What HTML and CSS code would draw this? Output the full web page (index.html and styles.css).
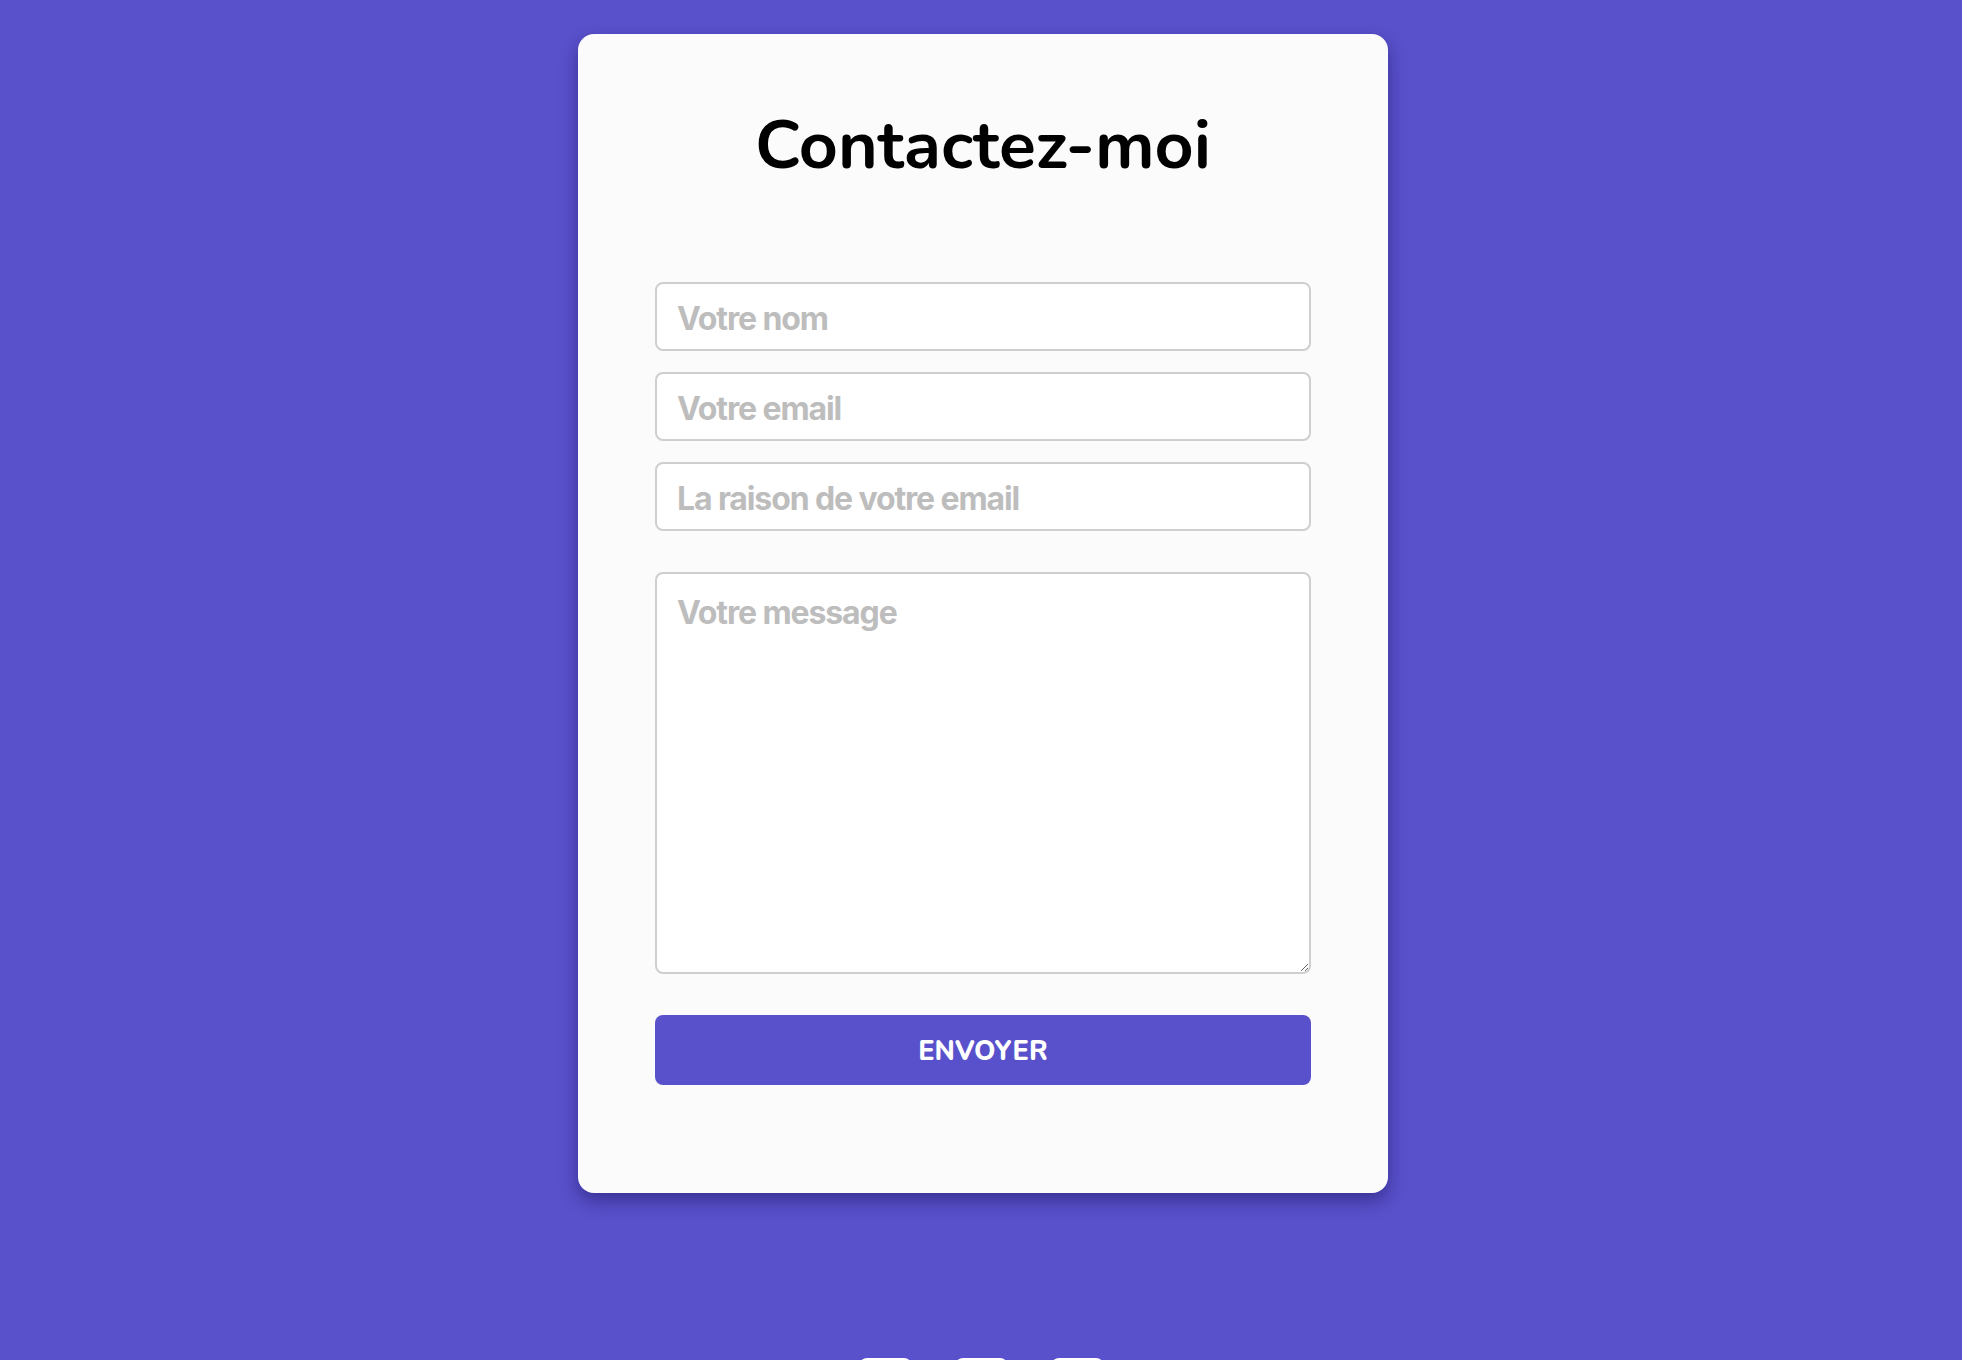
FILE: index.html
```html
<!DOCTYPE html>
<html lang="fr">
<head>
<meta charset="utf-8">
<title>Contactez-moi</title>
<link rel="stylesheet" href="styles.css">
</head>
<body>
<main class="page">
  <section class="card">
    <h1 class="title">Contactez-moi</h1>
    <form class="form">
      <div class="fields">
        <input class="field" type="text" placeholder="Votre nom">
        <input class="field" type="email" placeholder="Votre email">
        <input class="field" type="text" placeholder="La raison de votre email">
      </div>
      <textarea class="field message" placeholder="Votre message"></textarea>
      <button class="submit" type="button">ENVOYER</button>
    </form>
  </section>
  <footer class="socials">
    <span class="social"></span>
    <span class="social"></span>
    <span class="social"></span>
  </footer>
</main>
</body>
</html>
```

FILE: styles.css
```css
* { box-sizing: border-box; }
html, body { margin: 0; padding: 0; }
body {
  background: #5951cb;
  font-family: "Inter", "Liberation Sans", sans-serif;
  height: 1360px;
  overflow: hidden;
}
.page {
  display: flex;
  flex-direction: column;
  align-items: center;
  padding-top: 34px;
}
.card {
  width: 810px;
  height: 1159px;
  background: #fbfbfb;
  border-radius: 16px;
  box-shadow: 0 8px 18px rgba(20, 10, 80, 0.45);
  padding: 72px 77px 0;
  margin-left: 4px;
}
.title {
  margin: 0 0 96px;
  text-align: center;
  font-family: "Nunito", "Lato", sans-serif;
  font-weight: 700;
  font-size: 68px;
  line-height: 80px;
  color: #000;
}
.form {
  display: flex;
  flex-direction: column;
  gap: 41px;
}
.fields {
  display: flex;
  flex-direction: column;
  gap: 21px;
}
.field {
  display: block;
  width: 100%;
  height: 69px;
  border: 2px solid #cfcfcf;
  border-radius: 8px;
  background: #fff;
  padding: 4px 20px 0;
  font-family: "Inter", "Liberation Sans", sans-serif;
  font-weight: 700;
  font-size: 32px;
  letter-spacing: -0.035em;
  color: #333;
  outline: none;
}
.field::placeholder { color: #bdbdbd; opacity: 1; }
.message {
  height: 402px;
  padding: 19px 20px;
  resize: both;
  line-height: 40px;
}
.submit {
  height: 70px;
  border: none;
  border-radius: 8px;
  background: #5951cb;
  color: #fff;
  font-family: "Nunito", "Lato", sans-serif;
  font-weight: 800;
  font-size: 27px;
  padding-top: 4px;
  letter-spacing: 0;
  cursor: pointer;
}
.socials {
  display: flex;
  gap: 43px;
  margin-top: 165px;
}
.social {
  display: block;
  width: 53px;
  height: 53px;
  background: #fff;
  border-radius: 8px;
}
```
